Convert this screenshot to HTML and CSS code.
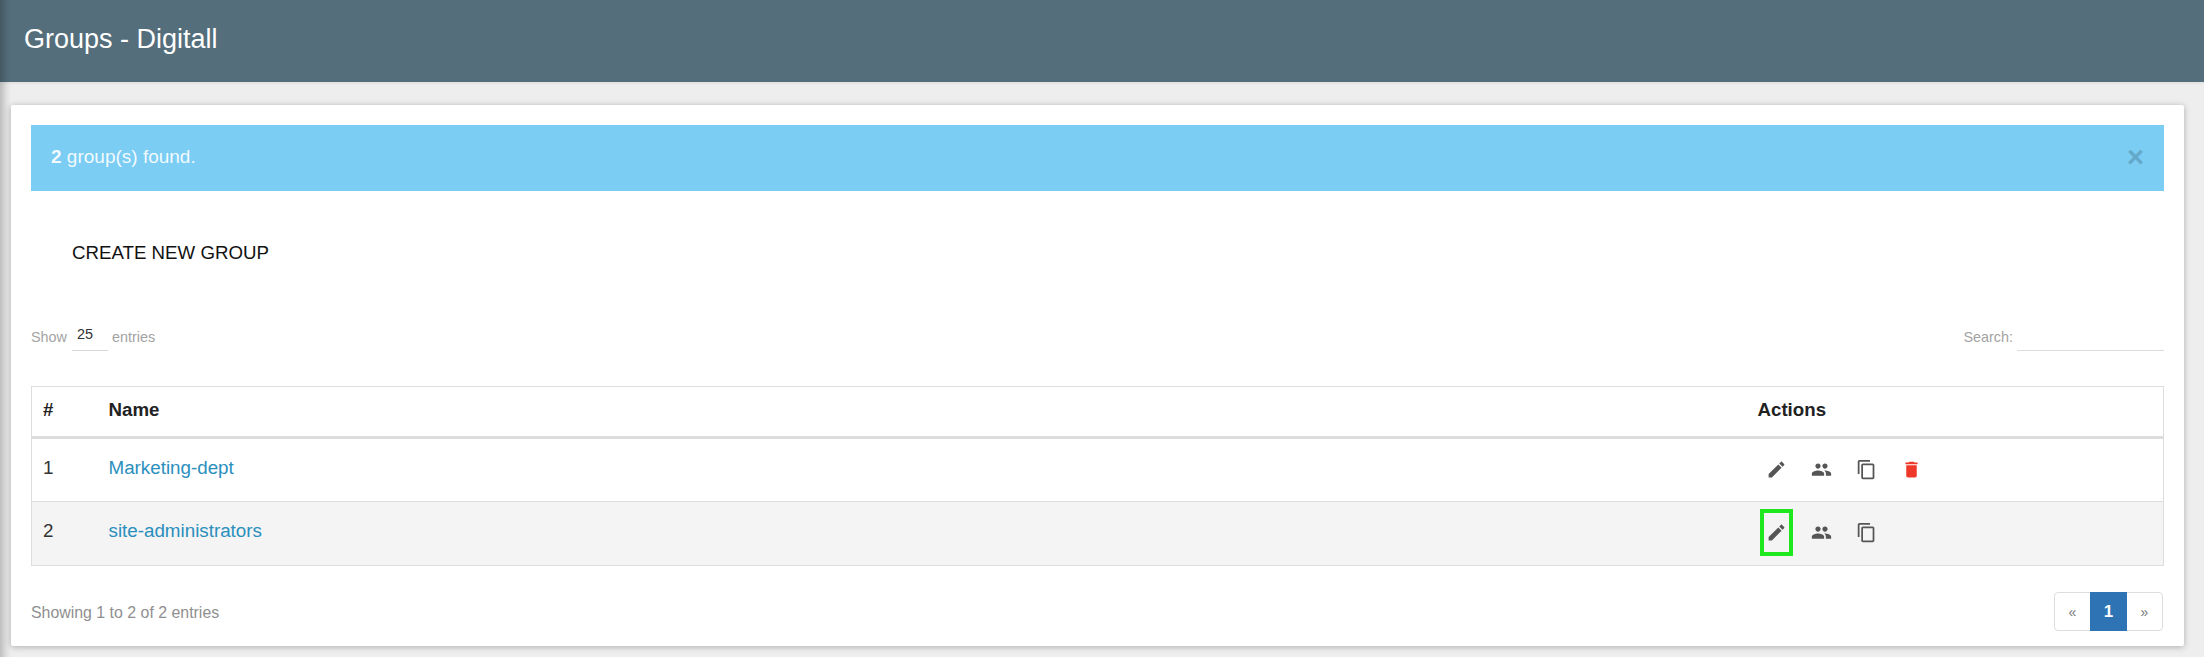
FILE: index.html
```html
<!DOCTYPE html>
<html lang="en">
<head>
<meta charset="utf-8">
<title>Groups - Digitall</title>
<link rel="stylesheet" href="styles.css">
</head>
<body>
<svg class="sprites" width="0" height="0" aria-hidden="true">
  <symbol id="i-edit" viewBox="0 0 24 24"><path d="M3 17.25V21h3.75L17.81 9.94l-3.75-3.75L3 17.25zM20.71 7.04c.39-.39.39-1.02 0-1.41l-2.34-2.34c-.39-.39-1.02-.39-1.41 0l-1.83 1.83 3.75 3.75 1.83-1.83z"/></symbol>
  <symbol id="i-group" viewBox="0 0 24 24"><path d="M16 11c1.66 0 2.99-1.34 2.99-3S17.66 5 16 5c-1.66 0-3 1.34-3 3s1.34 3 3 3zm-8 0c1.66 0 2.99-1.34 2.99-3S9.66 5 8 5C6.34 5 5 6.34 5 8s1.34 3 3 3zm0 2c-2.33 0-7 1.17-7 3.5V19h14v-2.5c0-2.33-4.67-3.5-7-3.5zm8 0c-.29 0-.62.02-.97.05 1.16.84 1.97 1.97 1.97 3.45V19h6v-2.5c0-2.33-4.67-3.5-7-3.5z"/></symbol>
  <symbol id="i-copy" viewBox="0 0 24 24"><path d="M16 1H4c-1.1 0-2 .9-2 2v14h2V3h12V1zm3 4H8c-1.1 0-2 .9-2 2v14c0 1.1.9 2 2 2h11c1.1 0 2-.9 2-2V7c0-1.1-.9-2-2-2zm0 16H8V7h11v14z"/></symbol>
  <symbol id="i-delete" viewBox="0 0 24 24"><path d="M6 19c0 1.1.9 2 2 2h8c1.1 0 2-.9 2-2V7H6v12zM19 4h-3.5l-1-1h-5l-1 1H5v2h14V4z"/></symbol>
</svg>
<div class="page">
  <header class="topbar"><h1 class="title">Groups - Digitall</h1></header>
  <main class="card">
    <div class="alert">
      <span class="alert-text"><strong>2</strong> group(s) found.</span>
      <span class="alert-close">×</span>
    </div>
    <a class="create-btn" href="#">CREATE NEW GROUP</a>
    <div class="controls">
      <div class="length">
        <span>Show</span>
        <span class="length-select">25</span>
        <span>entries</span>
      </div>
      <div class="search">
        <span>Search:</span>
        <span class="search-input"></span>
      </div>
    </div>
    <table class="groups">
      <colgroup><col class="col-num"><col class="col-name"><col class="col-actions"></colgroup>
      <thead>
        <tr><th>#</th><th>Name</th><th>Actions</th></tr>
      </thead>
      <tbody>
        <tr>
          <td class="text-cell">1</td>
          <td class="text-cell"><a class="group-link" href="#">Marketing-dept</a></td>
          <td class="actions-cell">
            <div class="actions">
              <a class="action" href="#"><svg class="icon"><use href="#i-edit"/></svg></a>
              <a class="action" href="#"><svg class="icon"><use href="#i-group"/></svg></a>
              <a class="action" href="#"><svg class="icon"><use href="#i-copy"/></svg></a>
              <a class="action danger" href="#"><svg class="icon"><use href="#i-delete"/></svg></a>
            </div>
          </td>
        </tr>
        <tr class="striped">
          <td class="text-cell">2</td>
          <td class="text-cell"><a class="group-link" href="#">site-administrators</a></td>
          <td class="actions-cell">
            <div class="actions">
              <a class="action highlighted" href="#"><svg class="icon"><use href="#i-edit"/></svg></a>
              <a class="action" href="#"><svg class="icon"><use href="#i-group"/></svg></a>
              <a class="action" href="#"><svg class="icon"><use href="#i-copy"/></svg></a>
            </div>
          </td>
        </tr>
      </tbody>
    </table>
    <div class="table-footer">
      <span class="info">Showing 1 to 2 of 2 entries</span>
      <nav class="pager">
        <a class="page-item" href="#">«</a>
        <a class="page-item current" href="#">1</a>
        <a class="page-item" href="#">»</a>
      </nav>
    </div>
  </main>
</div>
</body>
</html>
```
FILE: styles.css
```css
* { box-sizing: border-box; }
html, body { margin: 0; height: 100%; }
body {
  background: #eeeeee;
  font-family: "Liberation Sans", Arial, sans-serif;
  color: #222;
  overflow: hidden;
}
.sprites { display: block; height: 0; }
.page { position: relative; min-height: 657px; }
.page::after {
  content: "";
  position: absolute;
  inset: 0;
  pointer-events: none;
  background: linear-gradient(to right, rgba(0,0,0,.2), rgba(0,0,0,.05) 7px, rgba(0,0,0,0) 11px);
}
.topbar {
  height: 82px;
  background: #546e7b;
  display: flex;
  align-items: center;
  padding-left: 24px;
  box-shadow: 0 1px 3px rgba(0,0,0,.08);
}
.title {
  margin: 0 0 4px;
  color: #fff;
  font-size: 27px;
  font-weight: 400;
}
.card {
  margin: 23px 20px 0 11px;
  height: 541px;
  padding: 20px 20px 13px;
  background: #fff;
  border-radius: 2px;
  box-shadow: 0 1px 6px rgba(0,0,0,.28);
}
.alert {
  height: 66px;
  display: flex;
  align-items: center;
  justify-content: space-between;
  padding: 0 20px 0 20px;
  background: #7bcdf4;
  color: rgba(255,255,255,.92);
  font-size: 19px;
}
.alert-text { margin-bottom: 2px; }
.alert-close {
  color: #64a9c9;
  font-size: 29px;
  font-weight: 700;
  line-height: 1;
  margin-bottom: 1px;
}
.create-btn {
  display: block;
  width: max-content;
  height: 36px;
  margin-top: 44px;
  padding-left: 41px;
  color: #111;
  font-size: 18.7px;
  line-height: 36px;
  text-decoration: none;
}
.controls {
  display: flex;
  justify-content: space-between;
  align-items: center;
  height: 30px;
  margin-top: 50px;
  color: #a3a3a3;
  font-size: 14.4px;
}
.length, .search { display: flex; align-items: center; height: 100%; padding-top: 2px; }
.length-select {
  width: 36px;
  height: 30px;
  margin: -2px 4px 0 5px;
  padding: 5px 0 0 5px;
  border-bottom: 1px solid #d8d8d8;
  color: #333;
  line-height: 17px;
}
.search-input {
  width: 147px;
  height: 30px;
  margin: -2px 0 0 4px;
  border-bottom: 1px solid #dcdcdc;
}
.groups {
  width: 100%;
  margin-top: 35px;
  table-layout: fixed;
  border-collapse: collapse;
  border: 1px solid #dddddd;
  font-size: 18.8px;
}
.col-num { width: 67px; }
.col-actions { width: 416px; }
.groups th {
  height: 51px;
  padding: 0 10px 4px;
  border-bottom: 3px solid #dddddd;
  text-align: left;
  font-weight: 700;
  font-size: 18.7px;
  color: #222;
}
.groups th:first-child, .groups td:first-child { padding-left: 11px; }
.groups td {
  height: 64px;
  padding: 0 10px;
  color: #333;
  vertical-align: middle;
}
.groups td.text-cell { padding-bottom: 5px; }
.groups td.actions-cell { padding-bottom: 2px; }
.groups tbody tr + tr td { border-top: 1px solid #dddddd; }
.striped { background: #f4f4f4; }
.group-link { color: #2a8fbd; text-decoration: none; }
.actions { display: flex; align-items: center; gap: 12px; margin-left: 2px; }
.action {
  display: flex;
  align-items: center;
  justify-content: center;
  width: 33px;
  height: 47px;
  padding-left: 1px;
  color: #555;
}
.action.danger { color: #f0382a; }
.action.highlighted { outline: 4px solid #1fe81f; outline-offset: -4px; }
.icon { width: 21px; height: 21px; fill: currentColor; }
.table-footer {
  display: flex;
  justify-content: space-between;
  align-items: center;
  margin-top: 26px;
  height: 39px;
  color: #8f8f8f;
  font-size: 15.9px;
}
.info { margin-top: 3px; }
.pager {
  display: flex;
  height: 39px;
  margin-right: 1px;
  border: 1px solid #dddddd;
  border-radius: 4px;
}
.page-item {
  width: 35px;
  display: flex;
  align-items: center;
  justify-content: center;
  color: #777;
  font-size: 14px;
  text-decoration: none;
}
.page-item.current {
  width: 37px;
  margin: -1px 0;
  background: #2e74b5;
  color: #fff;
  font-size: 17px;
  font-weight: 700;
}
```
